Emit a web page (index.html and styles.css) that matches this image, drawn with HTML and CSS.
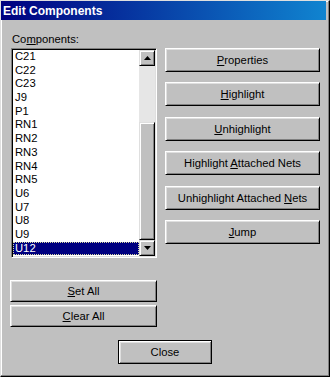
FILE: index.html
```html
<!DOCTYPE html>
<html>
<head>
<meta charset="utf-8">
<title>Edit Components</title>
<link rel="stylesheet" href="styles.css">
</head>
<body>
<div class="window">
  <div class="titlebar"><span class="title">Edit Components</span></div>
  <div class="content">
    <div class="main">
      <div class="left">
        <div class="label">Co<u>m</u>ponents:</div>
        <div class="listbox">
          <ul class="items">
            <li>C21</li>
            <li>C22</li>
            <li>C23</li>
            <li>J9</li>
            <li>P1</li>
            <li>RN1</li>
            <li>RN2</li>
            <li>RN3</li>
            <li>RN4</li>
            <li>RN5</li>
            <li>U6</li>
            <li>U7</li>
            <li>U8</li>
            <li>U9</li>
            <li class="selected">U12</li>
          </ul>
          <div class="scrollbar">
            <div class="arrow-btn"><svg width="7" height="4" viewBox="0 0 7 4"><polygon points="3.5,0 7,4 0,4" fill="#000"/></svg></div>
            <div class="track"></div>
            <div class="thumb"></div>
            <div class="arrow-btn"><svg width="7" height="4" viewBox="0 0 7 4"><polygon points="0,0 7,0 3.5,4" fill="#000"/></svg></div>
          </div>
        </div>
        <div class="left-buttons">
          <button class="btn small"><span><u>S</u>et All</span></button>
          <button class="btn small"><span><u>C</u>lear All</span></button>
        </div>
      </div>
      <div class="right">
        <button class="btn"><span><u>P</u>roperties</span></button>
        <button class="btn"><span><u>H</u>ighlight</span></button>
        <button class="btn"><span><u>U</u>nhighlight</span></button>
        <button class="btn"><span>Highlight <u>A</u>ttached Nets</span></button>
        <button class="btn"><span>Unhighlight Attached <u>N</u>ets</span></button>
        <button class="btn"><span><u>J</u>ump</span></button>
      </div>
    </div>
    <div class="footer">
      <button class="btn default"><span>Close</span></button>
    </div>
  </div>
</div>
</body>
</html>
```
FILE: styles.css
```css
* { box-sizing: border-box; }
html, body { margin: 0; padding: 0; background: #c0c0c0; }
body {
  font-family: "Liberation Sans", Arial, sans-serif;
  font-size: 11.25px;
  color: #000;
}
.window {
  width: 330px;
  height: 377px;
  background: #c0c0c0;
  border-top: 1px solid #dfdfdf;
  border-left: 1px solid #dfdfdf;
  border-right: 1px solid #000;
  border-bottom: 1px solid #000;
  box-shadow: inset -1px -1px 0 #808080, inset 1px 1px 0 #fff;
  padding: 0 3px 0 0;
  display: flex;
  flex-direction: column;
}
.titlebar {
  height: 19px;
  background: linear-gradient(to right, #000080, #1084d0);
  display: flex;
  align-items: center;
  padding-left: 2px;
}
.title {
  color: #fff;
  font-weight: bold;
  font-size: 12px;
}
.content {
  padding: 13px 0 0 9px;
}
.main {
  display: flex;
  gap: 8px;
}
.left {
  width: 147px;
  display: flex;
  flex-direction: column;
}
.label {
  line-height: 13px;
  height: 13px;
  margin: 0 0 2px 2px;
}
.listbox {
  margin-left: 1px;
  height: 210px;
  display: flex;
  border-top: 1px solid #808080;
  border-left: 1px solid #808080;
  border-right: 1px solid #fff;
  border-bottom: 1px solid #fff;
  box-shadow: inset 1px 1px 0 #000, inset -1px -1px 0 #dfdfdf;
  padding: 1px;
  background: #fff;
}
.items {
  list-style: none;
  margin: 0;
  padding: 0;
  flex: 1;
  background: #fff;
}
.items li {
  height: 13.7px;
  line-height: 13.7px;
  padding-left: 2px;
}
.items li.selected {
  background: #000080;
  color: #fff;
  outline: 1px dotted #d8d8a0;
  outline-offset: -1px;
}
.scrollbar {
  width: 16px;
  display: flex;
  flex-direction: column;
  background: #e6e6e6;
}
.arrow-btn {
  width: 16px;
  height: 16px;
  background: #c0c0c0;
  border-top: 1px solid #dfdfdf;
  border-left: 1px solid #dfdfdf;
  border-right: 1px solid #000;
  border-bottom: 1px solid #000;
  box-shadow: inset 1px 1px 0 #fff, inset -1px -1px 0 #808080;
  display: flex;
  align-items: center;
  justify-content: center;
}
.track {
  height: 56px;
}
.thumb {
  flex: 1;
  background: #c0c0c0;
  border-top: 1px solid #dfdfdf;
  border-left: 1px solid #dfdfdf;
  border-right: 1px solid #000;
  border-bottom: 1px solid #000;
  box-shadow: inset 1px 1px 0 #fff, inset -1px -1px 0 #808080;
}
.btn {
  font-family: "Liberation Sans", Arial, sans-serif;
  font-size: 11.25px;
  color: #000;
  background: #c0c0c0;
  border-top: 1px solid #fff;
  border-left: 1px solid #fff;
  border-right: 1px solid #000;
  border-bottom: 1px solid #000;
  box-shadow: inset 1px 1px 0 #dfdfdf, inset -1px -1px 0 #808080;
  padding: 0;
  margin: 0;
  height: 24px;
  width: 100%;
  display: flex;
  align-items: center;
  justify-content: center;
}
.btn span { white-space: pre; }
.left-buttons {
  margin-top: 22px;
  display: flex;
  flex-direction: column;
  gap: 3px;
}
.btn.small { height: 22px; }
.right {
  width: 155px;
  display: flex;
  flex-direction: column;
  gap: 10.4px;
  padding-top: 15px;
}
.footer {
  display: flex;
  justify-content: center;
  padding-top: 13px;
}
.btn.default {
  width: 94px;
  border: 1px solid #000;
  box-shadow: inset 1px 1px 0 #fff, inset -1px -1px 0 #808080, inset 2px 2px 0 #dfdfdf;
  margin-left: -6px;
}
```
